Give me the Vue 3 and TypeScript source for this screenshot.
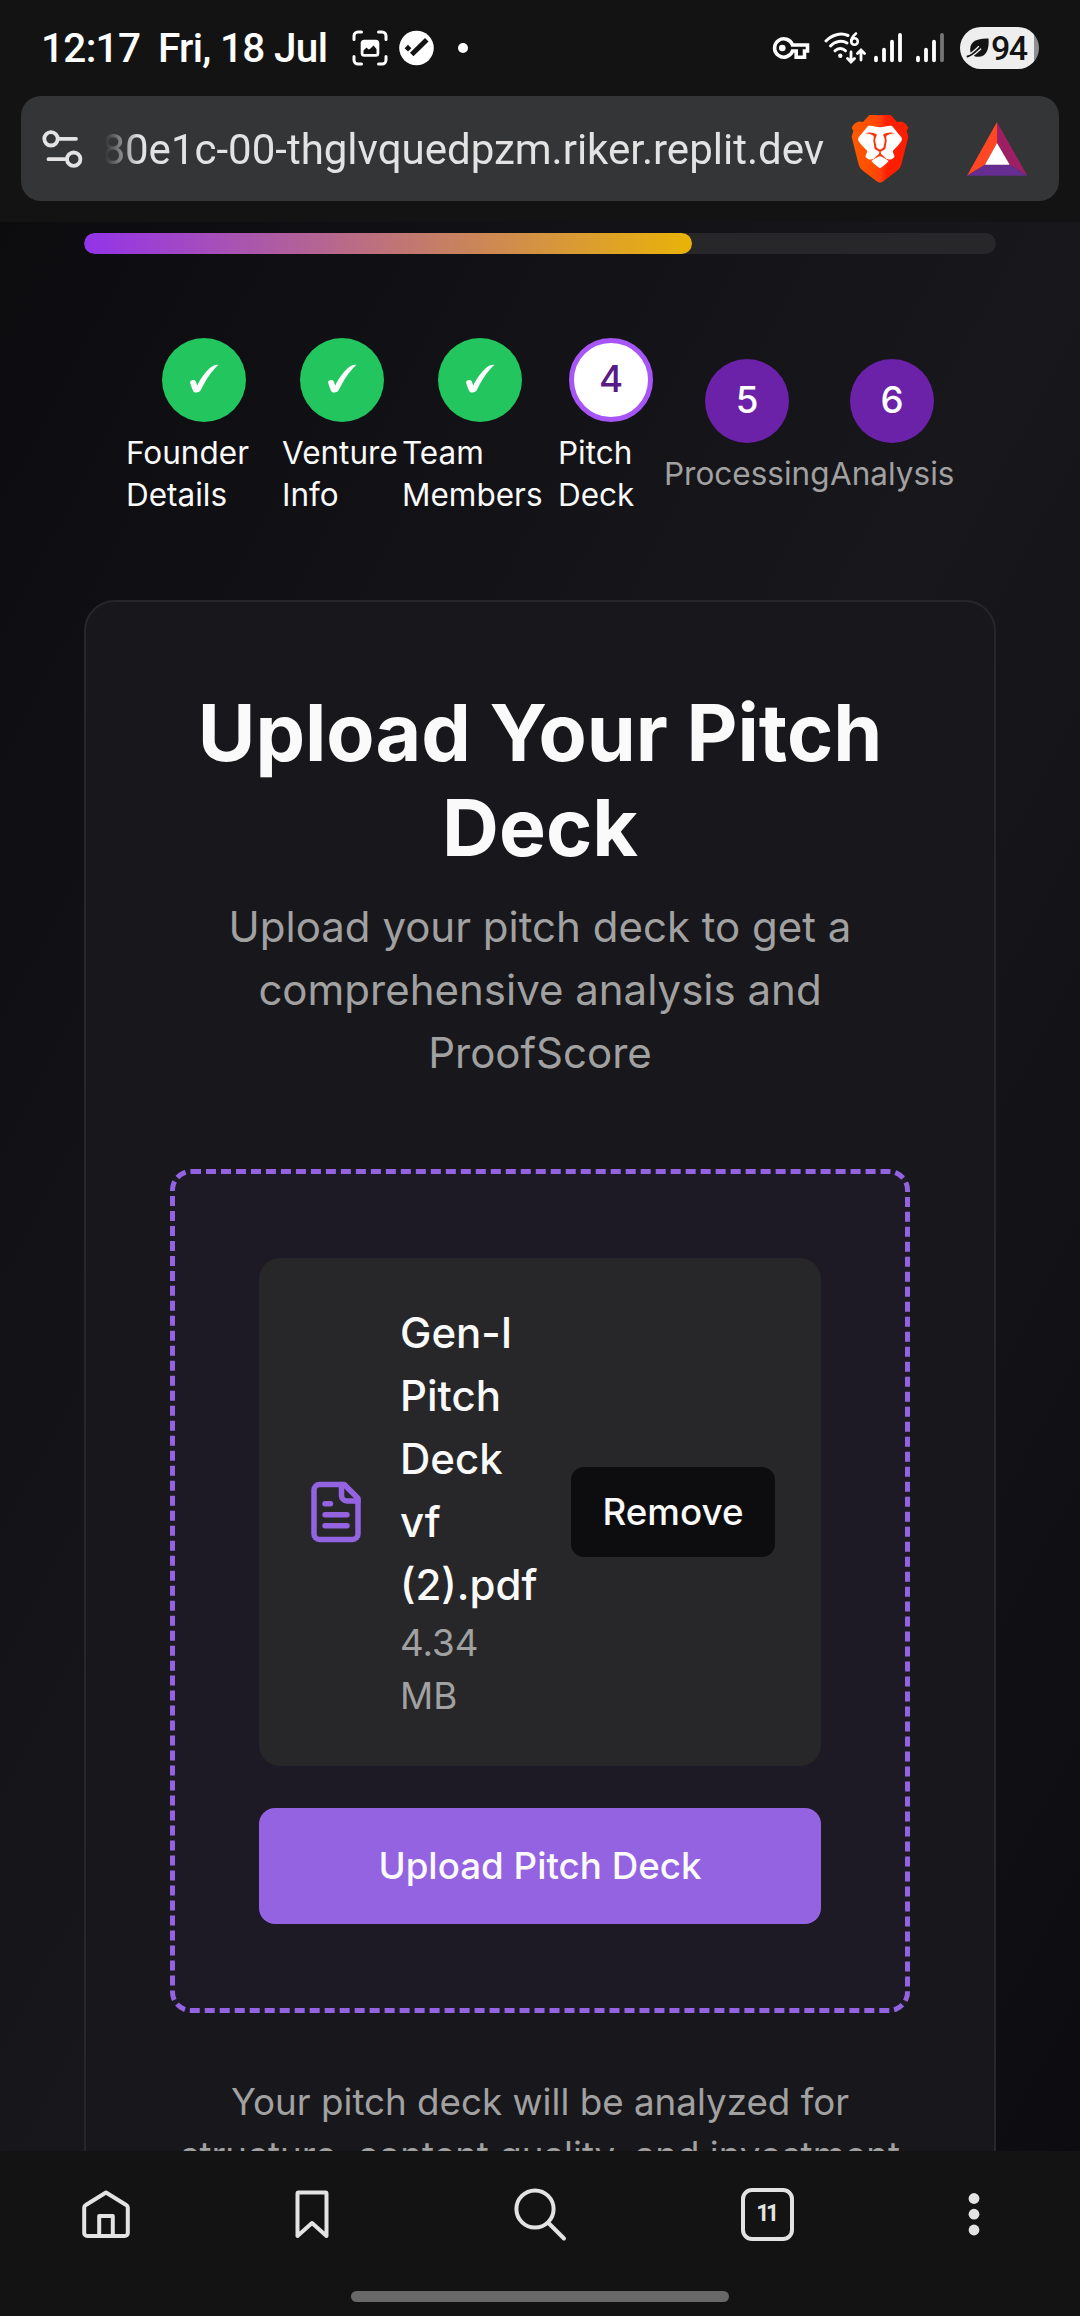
<script setup lang="ts">
interface Step {
  id: number
  label: string
  state: 'done' | 'current' | 'todo'
}

const steps: Step[] = [
  { id: 1, label: 'Founder Details', state: 'done' },
  { id: 2, label: 'Venture Info', state: 'done' },
  { id: 3, label: 'Team Members', state: 'done' },
  { id: 4, label: 'Pitch Deck', state: 'current' },
  { id: 5, label: 'Processing', state: 'todo' },
  { id: 6, label: 'Analysis', state: 'todo' },
]

const progress = (4 / steps.length) * 100
const tabCount = 11
const battery = 94
</script>

<template>
  <div class="screen">
    <header class="chrome">
      <div class="status">
        <span class="clock">12:17</span>
        <span class="date">Fri, 18 Jul</span>
        <svg class="s-shot" width="36" height="36" viewBox="0 0 36 36">
          <path d="M2 9.500V6a4 4 0 0 1 4-4h3.500M26.500 2H30a4 4 0 0 1 4 4v3.500M34 26.500V30a4 4 0 0 1-4 4h-3.500M9.500 34H6a4 4 0 0 1-4-4v-3.500" fill="none" stroke="#fff" stroke-width="3" stroke-linecap="round" />
          <rect x="8.700" y="9.700" width="18.600" height="17" rx="3.500" fill="#fff" />
          <path d="M11.500 24v-3.500l3-3 2 2 2-1 3-3 3 3.500V24z" fill="#131313" />
        </svg>
        <svg class="s-check" width="35" height="36" viewBox="0 0 35 36">
          <circle cx="17.500" cy="18" r="17.300" fill="#fff" />
          <path d="M14.500 22.800 26 11.500" stroke="#131313" stroke-width="5" stroke-linecap="square" />
          <path d="M9 14.800l3.400 3.400L9 21.600l-3.400-3.400z" fill="#131313" />
        </svg>
        <span class="s-dot"></span>
        <span class="grow"></span>
        <svg class="s-key" width="39" height="24" viewBox="0 0 39 24">
          <path d="M21.500 9h15v6h-3v6.200h-8.300V15h-3.700A9.200 9.200 0 1 1 21.500 9z" fill="none" stroke="#fff" stroke-width="3.600" />
          <circle cx="11.300" cy="12" r="3.300" fill="#fff" />
        </svg>
        <svg class="s-wifi" width="42" height="34" viewBox="0 0 42 34">
          <g fill="none" stroke="#fff" stroke-width="3" stroke-linecap="round">
            <path d="M2 10C8 3.500 17 1.500 24 4.500" />
            <path d="M6.500 15C11 10 18 9 23 12" />
            <path d="M11 19.800c3-3 7.500-3 10.500 0" />
            <path d="M27 21v9M23.500 27.500 27 31l3.500-3.500M37 29v-9M33.500 22.500 37 19l3.500 3.500" stroke-width="2.800" />
            <path d="M32 2.500C28 6 27.200 8 27.200 10.200" stroke-width="2.600" />
            <circle cx="30.500" cy="10.500" r="3.300" stroke-width="2.600" />
          </g>
          <circle cx="16.300" cy="24.800" r="2.200" fill="#fff" />
        </svg>
        <svg class="s-signal" width="30" height="30" viewBox="0 0 30 30">
          <path d="M3 24.700v2.600M11 16.700v10.600M19 8.700v18.600M27 2v25.300" stroke="#fff" stroke-width="3.800" stroke-linecap="round" />
        </svg>
        <svg class="s-signal second" width="30" height="30" viewBox="0 0 30 30">
          <path d="M3 24.700v2.600M11 16.700v10.600M19 8.700v18.600" stroke="#fff" stroke-width="3.800" stroke-linecap="round" />
          <path d="M27 2v25.300" stroke="#757575" stroke-width="3.800" stroke-linecap="round" />
        </svg>
        <span class="battery">
          <svg width="24" height="22" viewBox="0 0 24 22">
            <path d="M4.500 15.500C2.500 6 9 1 22.500 1.500 23.500 13 20 21.500 9 19.500z" fill="#131313" />
            <path d="M1.500 19.500C6 18.500 8.500 15.500 14 10.500" fill="none" stroke="#eee" stroke-width="4.500" />
            <path d="M1.500 19.500C6 18.500 8.500 15.500 14 10.500" fill="none" stroke="#131313" stroke-width="1.800" stroke-linecap="round" />
          </svg>
          <b>{{ battery }}</b>
        </span>
      </div>

      <div class="url-bar">
        <svg class="tune" width="44" height="42" viewBox="0 0 44 42">
          <g fill="none" stroke="#e3e3e3" stroke-width="3.800" stroke-linecap="round">
            <circle cx="10" cy="10.800" r="6.700" />
            <path d="M18 10.800h17M7.500 31.200H24" />
            <circle cx="32.700" cy="31.200" r="6.700" />
          </g>
        </svg>
        <div class="url"><span>80e1c-00-thglvquedpzm.riker.replit.dev</span></div>
        <svg class="brave" width="60" height="70" viewBox="90 42 180 210">
          <defs>
            <linearGradient id="mane" x1="0" x2="1" y1="0" y2="0">
              <stop offset="0" stop-color="#ff5a00" />
              <stop offset="0.400" stop-color="#ff4a00" />
              <stop offset="0.500" stop-color="#ff4014" />
              <stop offset="0.620" stop-color="#ff2000" />
              <stop offset="1" stop-color="#ff1c00" />
            </linearGradient>
          </defs>
          <path d="M148 45h64l19 21c16-5 26 2 34 17l-5 10 5 17-19 76c-3 13-7 21-17 28l-37 28c-8 7-16 7-24 0l-37-28c-10-7-14-15-17-28L95 110l5-17-5-10c8-15 18-22 34-17z" fill="url(#mane)" />
          <path d="M180 82c12 0 24-6 36-4l28 34c5 8-2 15-8 22l-17 18c-3 5 6 12 4 18-4 8-16 11-24 6l-19-15-19 15c-8 5-20 2-24-6-2-6 7-13 4-18l-17-18c-6-7-13-14-8-22l28-34c12-2 24 4 36 4z" fill="#fff" />
          <path d="M135 100c12-5 27-2 36 4-3 8-7 12-5 21l4 18 10 6 10-6 4-18c2-9-2-13-5-21 9-6 24-9 36-4-8 1-20 3-25 7-3 4 0 9 0 16l-4 24-14 8 1 7 14 11-17-8-17 8 14-11 1-7-14-8-4-24c0-7 3-12 0-16-5-4-17-6-25-7z" fill="#f9330a" />
          <path d="M180 169c9 3 18 8 26 14-7 8-17 16-26 22-9-6-19-14-26-22 8-6 17-11 26-14z" fill="#fff" />
        </svg>
        <svg class="bat" width="62" height="56" viewBox="440 62 186 168">
          <path d="M533 65 443 226l54-33 36-65z" fill="#ff4724" />
          <path d="M533 65l91 161-53-33-38-65z" fill="#9e1f63" />
          <path d="M443 226h181l-53-33h-74z" fill="#662d91" />
          <path d="M533 128l38 65h-74z" fill="#fff" />
        </svg>
      </div>
    </header>

    <main class="page">
      <div class="track"><div class="fill" :style="{ width: progress + '%' }"></div></div>

      <ol class="steps">
        <li v-for="s in steps" :key="s.id" :class="['step', s.state]">
          <span class="bubble">
            <svg v-if="s.state === 'done'" width="30" height="32" viewBox="0 0 30 32">
              <path d="M1 19c1.500-2.600 5.200-2.600 6 0l1.200 3.500C13 13 19 5 25.300 2.200c1.300-.6 2.900-.7 4-.3C22 8.500 16.500 17.500 11.500 27.500c-1.200 2.300-6.300 2.800-7.300.4C3 25.400 1.800 22.200 1 19z" fill="#fff" />
            </svg>
            <template v-else>{{ s.id }}</template>
          </span>
          <span class="label">{{ s.label }}</span>
        </li>
      </ol>

      <section class="card">
        <h1>Upload Your Pitch Deck</h1>
        <p class="lead">Upload your pitch deck to get a comprehensive analysis and ProofScore</p>

        <div class="dropzone">
          <div class="file">
            <svg class="doc" width="66" height="66" viewBox="0 0 24 24" fill="none" stroke="#9463e2" stroke-width="2" stroke-linecap="round" stroke-linejoin="round">
              <path d="M15 2H6a2 2 0 0 0-2 2v16a2 2 0 0 0 2 2h12a2 2 0 0 0 2-2V7Z" />
              <path d="M14 2v4a2 2 0 0 0 2 2h4" />
              <path d="M10 9H8M16 13H8M16 17H8" />
            </svg>
            <div class="meta">
              <p class="name">Gen-I Pitch Deck vf (2).pdf</p>
              <p class="size">4.34 MB</p>
            </div>
            <button class="remove">Remove</button>
          </div>
          <button class="upload">Upload Pitch Deck</button>
        </div>

        <p class="note">Your pitch deck will be analyzed for structure, content quality, and investment</p>
      </section>
    </main>

    <nav class="bottom">
      <div class="tabs">
        <svg width="52" height="52" viewBox="0 0 52 52" class="ico">
          <path d="M26 4.500 46.200 17a3 3 0 0 1 1.600 2.500V45a3 3 0 0 1-3 3H7.200a3 3 0 0 1-3-3V19.500A3 3 0 0 1 5.800 17zM19.200 48V28h13.600v20" />
        </svg>
        <svg width="52" height="52" viewBox="0 0 52 52" class="ico">
          <path d="M11.500 5.500a1 1 0 0 1 1-1h27a1 1 0 0 1 1 1V48L26 35 11.500 48z" />
        </svg>
        <svg width="56" height="56" viewBox="0 0 56 56" class="ico">
          <circle cx="23" cy="23" r="18.600" />
          <path d="M36.500 37 52 52.500" stroke-linecap="round" />
        </svg>
        <span class="count">{{ tabCount }}</span>
        <svg width="16" height="48" viewBox="0 0 16 48">
          <g fill="#e3e3e3"><circle cx="8" cy="8.500" r="5.400" /><circle cx="8" cy="24.200" r="5.400" /><circle cx="8" cy="40" r="5.400" /></g>
        </svg>
      </div>
      <span class="handle"></span>
    </nav>
  </div>
</template>

<style>
body {
  margin: 0;
  background: #131313;
}
</style>

<style scoped>
.screen {
  width: 1080px;
  height: 2316px;
  overflow: hidden;
  display: flex;
  flex-direction: column;
  background: #131313;
  font-family: Inter, "Liberation Sans", sans-serif;
  color: #fafafa;
}
.screen *,
.screen {
  box-sizing: border-box;
}
p,
h1,
ol {
  margin: 0;
  padding: 0;
}
svg {
  display: block;
  flex: none;
}
.chrome {
  flex: none;
  height: 222px;
  font-family: Roboto, sans-serif;
}
.status {
  height: 96px;
  display: flex;
  align-items: center;
  padding: 0 41px 0 41px;
  font-size: 40.500px;
  letter-spacing: -0.700px;
  font-weight: 500;
  color: #fff;
  white-space: nowrap;
}
.clock {
  width: 98px;
  margin-right: 19px;
}
.date {
  width: 170px;
}
.s-shot {
  margin-left: 24px;
}
.s-check {
  margin-left: 11px;
}
.s-dot {
  width: 10px;
  height: 10px;
  border-radius: 50%;
  background: #fff;
  margin-left: 24px;
}
.grow {
  flex: 1;
}
.s-wifi {
  margin-left: 14px;
}
.s-signal {
  margin-left: 7px;
}
.s-signal.second {
  margin-left: 12px;
}
.battery {
  width: 79px;
  height: 42px;
  margin-left: 15px;
  border-radius: 21px;
  background: linear-gradient(90deg, #eee 74px, #8f8f8f 74px);
  color: #131313;
  display: flex;
  align-items: center;
  padding-left: 6px;
}
.battery b {
  font-size: 34px;
  font-weight: 500;
  letter-spacing: -1.500px;
  line-height: 42px;
  margin-left: 1px;
}
.url-bar {
  height: 105px;
  margin: 0 21px;
  border-radius: 20px;
  background: #343537;
  display: flex;
  align-items: center;
}
.tune {
  margin-left: 20px;
}
.url {
  width: 719px;
  margin-left: 20px;
  padding-top: 3px;
  overflow: hidden;
  display: flex;
  justify-content: flex-end;
  font-size: 42px;
  line-height: 60px;
  color: #e3e3e3;
  white-space: nowrap;
  -webkit-mask-image: linear-gradient(90deg, transparent, #000 34px);
  mask-image: linear-gradient(90deg, transparent, #000 34px);
}
.brave {
  margin-left: 26px;
}
.bat {
  margin-left: 56px;
}
.page {
  flex: none;
  height: 1929px;
  overflow: hidden;
  padding: 11px 84px 0;
  background: linear-gradient(to bottom right, #0c0c0f, #18171c 50%, #0c0b0f) 0 0 / 100% 2060px no-repeat;
}
.track {
  height: 21px;
  border-radius: 11px;
  background: #27272a;
  overflow: hidden;
}
.fill {
  height: 100%;
  border-radius: 11px;
  background: linear-gradient(90deg, #9333ea, #eab308);
}
.steps {
  list-style: none;
  display: grid;
  grid-template-columns: 156px 120px 156px 106px 166px 124px;
  align-items: center;
  padding: 84px 42px 0;
  height: 262.500px;
}
.step {
  display: flex;
  flex-direction: column;
  align-items: center;
}
.bubble {
  width: 84px;
  height: 84px;
  border-radius: 50%;
  display: flex;
  align-items: center;
  justify-content: center;
  font-size: 36.750px;
  line-height: 52px;
  padding-bottom: 2px;
  font-weight: 500;
  background: #6b21a8;
  color: #fff;
}
.done .bubble {
  background: #22c55e;
}
.current .bubble {
  background: #fff;
  border: 5px solid #a855f7;
  color: #581c87;
}
.label {
  width: 100%;
  margin-top: 9.500px;
  margin-bottom: 1px;
  font-size: 31.500px;
  line-height: 42px;
}
.todo .label {
  color: #a1a1a1;
}
.card {
  margin-top: 83.500px;
  height: 1700px;
  border: 2px solid #27272a;
  border-radius: 31px;
  background: #18171b;
  padding: 84px;
  text-align: center;
}
h1 {
  font-size: 78.750px;
  line-height: 94.500px;
  font-weight: 700;
}
.lead {
  margin-top: 20px;
  font-size: 42px;
  line-height: 63px;
  color: #a1a1a1;
}
.dropzone {
  margin-top: 85px;
  border: 5px dashed #9463e2;
  border-radius: 21px;
  background: #1d1a26;
  padding: 84px;
}
.file {
  height: 508px;
  padding: 0 46px 0 44px;
  display: flex;
  align-items: center;
  border-radius: 21px;
  background: #272729;
  text-align: left;
}
.meta {
  width: 139px;
  margin-left: 31px;
}
.name {
  margin: -1px 0 1px;
  font-size: 42px;
  line-height: 63px;
  font-weight: 500;
}
.size {
  width: 110px;
  font-size: 36.750px;
  line-height: 52.500px;
  color: #a1a1a1;
}
button {
  border: 0;
  padding: 0;
  font: 500 36.750px/52px Inter, "Liberation Sans", sans-serif;
  color: #fafafa;
}
.remove {
  flex: none;
  width: 204px;
  height: 90px;
  margin-left: auto;
  border-radius: 13px;
  background: #0d0d0f;
}
.upload {
  display: block;
  width: 100%;
  height: 116px;
  margin-top: 42px;
  border-radius: 16px;
  background: #9463e2;
}
.note {
  margin-top: 63px;
  font-size: 36.750px;
  line-height: 52.500px;
  color: #a1a1a1;
}
.bottom {
  flex: 1;
  background: #131313;
}
.tabs {
  height: 126px;
  padding-left: 2px;
  display: grid;
  grid-template-columns: 208px 203px 254px 201px 212px;
  align-items: center;
  justify-items: center;
}
.ico {
  fill: none;
  stroke: #e3e3e3;
  stroke-width: 4;
  stroke-linejoin: round;
}
.count {
  width: 53px;
  height: 53px;
  border: 4px solid #e3e3e3;
  border-radius: 11px;
  display: flex;
  align-items: center;
  justify-content: center;
  font: 700 23px/24px Roboto, sans-serif;
  letter-spacing: -3.500px;
  text-indent: -3px;
  color: #e3e3e3;
}
.handle {
  display: block;
  width: 378px;
  height: 11px;
  margin: 14px auto 0;
  border-radius: 6px;
  background: #686868;
}
</style>
